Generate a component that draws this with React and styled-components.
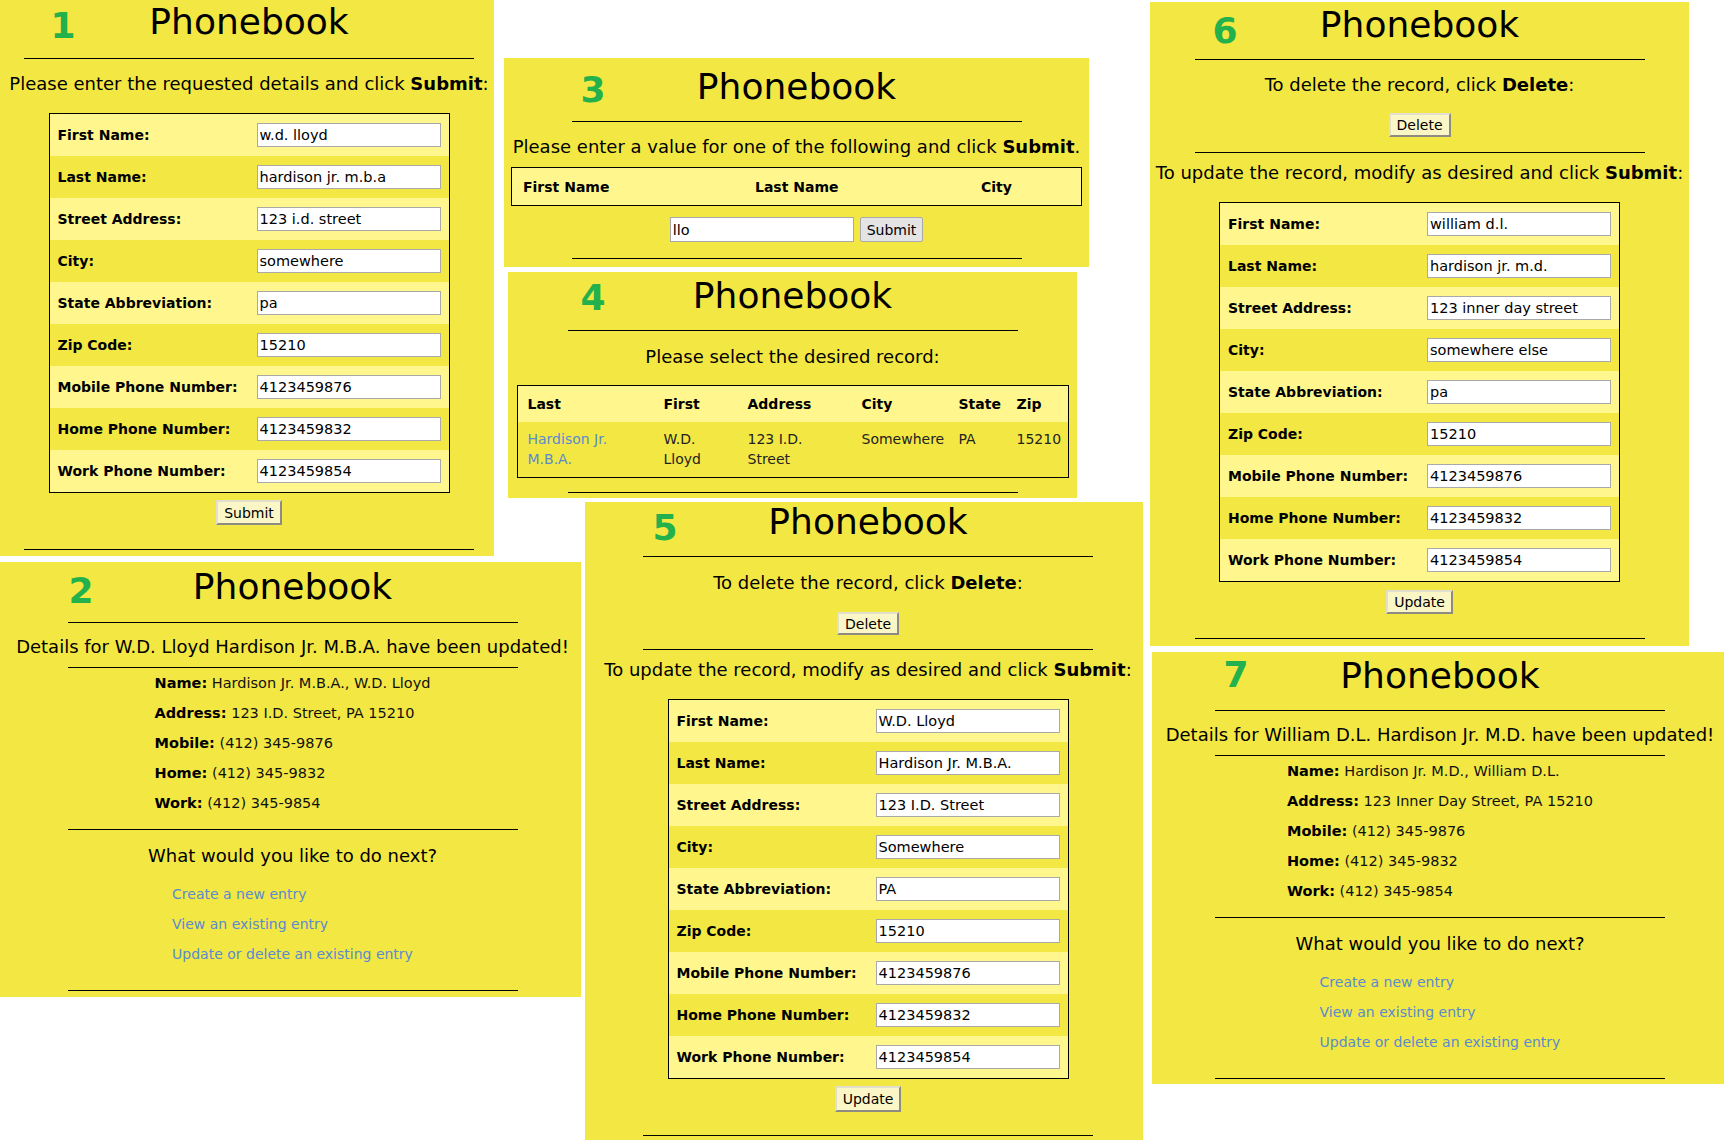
import React from 'react';
import styled, { createGlobalStyle } from 'styled-components';

const FONT = '"DejaVu Sans", Verdana, sans-serif';
const YELLOW = '#f3e843';
const LIGHT = '#fff78e';
const GREEN = '#22b14c';
const LINK = '#5a8ad0';

const GlobalStyle = createGlobalStyle`
  body {
    margin: 0;
    background: #fff;
    font-family: ${FONT};
    color: #000;
  }
`;

const Canvas = styled.div`
  position: relative;
  width: 1731px;
  height: 1148px;
  overflow: hidden;
  background: #fff;
`;

// each screenshot sits at its own spot on the collage
const Shot = styled.section`
  position: absolute;
  left: ${p => p.$x}px;
  top: ${p => p.$y}px;
  width: ${p => p.$w}px;
  height: ${p => p.$h}px;
  box-sizing: border-box;
  padding-left: ${p => p.$shift || 0}px;
  display: flex;
  flex-direction: column;
  align-items: center;
  background: ${YELLOW};
  overflow: hidden;
`;

const Badge = styled.span`
  position: absolute;
  left: ${p => p.$x}px;
  top: ${p => p.$y}px;
  transform: translate(-50%, -50%);
  font: 700 36px/1 ${FONT};
  color: ${GREEN};
`;

const Title = styled.h1`
  margin: ${p => p.$top}px 0 0;
  font: 400 36px/44px ${FONT};
  color: #000;
  text-align: center;
  flex-shrink: 0;
`;

const Rule = styled.hr`
  width: 450px;
  height: 0;
  margin: ${p => p.$top}px 0 0;
  border: 0;
  border-top: 1px solid #000;
  flex-shrink: 0;
`;

const Prompt = styled.p`
  margin: ${p => p.$top}px 0 0;
  font-size: 18px;
  line-height: 20px;
  white-space: nowrap;
  text-align: center;
  flex-shrink: 0;

  b {
    font-weight: 700;
  }
`;

const Action = styled.button`
  margin-top: ${p => p.$top}px;
  height: ${p => p.$h || 24}px;
  padding: 0 6px;
  font: 14px ${FONT};
  color: #000;
  background: ${p => (p.$plain ? '#e4e4e4' : '#fbf6c6')};
  border: ${p => (p.$plain ? '1px solid #a9a9a9' : '2px outset #e2dfcf')};
  border-radius: ${p => (p.$plain ? '2px' : '0')};
  flex-shrink: 0;
  cursor: pointer;
`;

/* ---------- entry form (pages 1, 5, 6) ---------- */

const FormTable = styled.table`
  margin-top: ${p => p.$top}px;
  width: 401px;
  border: 1px solid #000;
  border-collapse: separate;
  border-spacing: 0;
  flex-shrink: 0;
`;

const FormRow = styled.tr`
  height: 42px;
  background: ${p => (p.$alt ? LIGHT : 'transparent')};
`;

const FieldLabel = styled.th`
  width: 199px;
  padding: 0 0 0 8px;
  text-align: left;
  font: 700 14px ${FONT};
  white-space: nowrap;
`;

const FieldCell = styled.td`
  padding: 0 8px 0 0;
  vertical-align: middle;
`;

const Field = styled.input`
  box-sizing: border-box;
  display: block;
  width: ${p => p.$w || 184}px;
  height: ${p => p.$h || 24}px;
  padding: 0 2px;
  border: 1px solid #a9a9a9;
  background: #fff;
  font: 14.5px ${FONT};
  color: #000;
  outline: none;
`;

const LABELS = [
  'First Name:',
  'Last Name:',
  'Street Address:',
  'City:',
  'State Abbreviation:',
  'Zip Code:',
  'Mobile Phone Number:',
  'Home Phone Number:',
  'Work Phone Number:',
];

const EntryForm = ({ top, values }) => (
  <FormTable $top={top}>
    <tbody>
      {LABELS.map((label, idx) => (
        <FormRow key={label} $alt={idx % 2 === 0}>
          <FieldLabel>{label}</FieldLabel>
          <FieldCell>
            <Field defaultValue={values[idx]} />
          </FieldCell>
        </FormRow>
      ))}
    </tbody>
  </FormTable>
);

/* ---------- search (page 3) ---------- */

const SearchTable = styled.table`
  margin-top: ${p => p.$top}px;
  width: 571px;
  height: 39px;
  table-layout: fixed;
  border: 1px solid #000;
  border-collapse: separate;
  border-spacing: 0;
  background: ${LIGHT};
  flex-shrink: 0;
`;

const Col = styled.col`
  width: ${p => p.$w}px;
`;

const HeadCell = styled.th`
  padding: 0 0 0 ${p => p.$pad || 10}px;
  text-align: left;
  font: 700 14px ${FONT};
  white-space: nowrap;
`;

const SearchBar = styled.div`
  display: flex;
  gap: 6px;
  margin-top: ${p => p.$top}px;
  flex-shrink: 0;
`;

/* ---------- results (page 4) ---------- */

const ResultTable = styled.table`
  margin-top: ${p => p.$top}px;
  width: 552px;
  table-layout: fixed;
  border: 1px solid #000;
  border-collapse: separate;
  border-spacing: 0;
  flex-shrink: 0;
`;

const HeadRow = styled.tr`
  height: 36px;
  background: ${LIGHT};
`;

const DataCell = styled.td`
  height: 55px;
  padding: 7px 0 0 10px;
  box-sizing: border-box;
  vertical-align: top;
  font: 14px/20px ${FONT};
  color: #222;
`;

const RecordLink = styled.a`
  color: ${LINK};
  text-decoration: none;
`;

/* ---------- confirmation (pages 2, 7) ---------- */

const DetailList = styled.div`
  margin-top: ${p => p.$top || 0}px;
  text-align: left;
  flex-shrink: 0;
`;

const DetailLine = styled.p`
  margin: 0;
  font-size: 14.5px;
  line-height: 30px;
  white-space: nowrap;
  color: #111;

  strong {
    color: #000;
  }
`;

const NextHeading = styled.h2`
  margin: ${p => p.$top}px 0 0;
  font: 400 18px/22px ${FONT};
  text-align: center;
  flex-shrink: 0;
`;

const NextLinks = styled.ul`
  list-style: none;
  margin: ${p => p.$top}px 0 0;
  padding: 0;
  flex-shrink: 0;

  li {
    font-size: 14px;
    line-height: 30px;
    white-space: nowrap;
  }

  a {
    color: ${LINK};
    text-decoration: none;
  }
`;

const Confirmation = ({ who, details }) => (
  <>
    <Prompt $top={14}>Details for {who} have been updated!</Prompt>
    <Rule $top={10} />
    <DetailList>
      {details.map(([k, v]) => (
        <DetailLine key={k}>
          <strong>{k}:</strong> {v}
        </DetailLine>
      ))}
    </DetailList>
    <Rule $top={11} />
    <NextHeading $top={15}>What would you like to do next?</NextHeading>
    <NextLinks $top={12}>
      <li><a href="#create">Create a new entry</a></li>
      <li><a href="#view">View an existing entry</a></li>
      <li><a href="#update">Update or delete an existing entry</a></li>
    </NextLinks>
    <Rule $top={21} />
  </>
);

const PHONES = ['4123459876', '4123459832', '4123459854'];

export default function App() {
  return (
    <Canvas>
      <GlobalStyle />

      {/* 1 */}
      <Shot $x={0} $y={0} $w={494} $h={556} $shift={4}>
        <Badge $x={63} $y={26}>1</Badge>
        <Title $top={0}>Phonebook</Title>
        <Rule $top={14} />
        <Prompt $top={15}>Please enter the requested details and click <b>Submit</b>:</Prompt>
        <EntryForm
          top={19}
          values={['w.d. lloyd', 'hardison jr. m.b.a', '123 i.d. street', 'somewhere', 'pa', '15210', ...PHONES]}
        />
        <Action $top={7} $h={25}>Submit</Action>
        <Rule $top={24} />
      </Shot>

      {/* 2 */}
      <Shot $x={0} $y={562} $w={581} $h={435} $shift={4}>
        <Badge $x={81} $y={29}>2</Badge>
        <Title $top={3}>Phonebook</Title>
        <Rule $top={13} />
        <Confirmation
          who="W.D. Lloyd Hardison Jr. M.B.A."
          details={[
            ['Name', 'Hardison Jr. M.B.A., W.D. Lloyd'],
            ['Address', '123 I.D. Street, PA 15210'],
            ['Mobile', '(412) 345-9876'],
            ['Home', '(412) 345-9832'],
            ['Work', '(412) 345-9854'],
          ]}
        />
      </Shot>

      {/* 3 */}
      <Shot $x={504} $y={58} $w={585} $h={209}>
        <Badge $x={89} $y={32}>3</Badge>
        <Title $top={7}>Phonebook</Title>
        <Rule $top={12} />
        <Prompt $top={15}>Please enter a value for one of the following and click <b>Submit</b>.</Prompt>
        <SearchTable $top={10}>
          <colgroup>
            <Col $w={232} />
            <Col $w={226} />
            <Col $w={111} />
          </colgroup>
          <tbody>
            <tr>
              <HeadCell $pad={11}>First Name</HeadCell>
              <HeadCell $pad={11}>Last Name</HeadCell>
              <HeadCell $pad={11}>City</HeadCell>
            </tr>
          </tbody>
        </SearchTable>
        <SearchBar $top={11}>
          <Field $w={184} $h={25} defaultValue="llo" />
          <Action $top={0} $h={25} $plain>Submit</Action>
        </SearchBar>
        <Rule $top={16} />
      </Shot>

      {/* 4 */}
      <Shot $x={508} $y={272} $w={569} $h={226}>
        <Badge $x={85} $y={26}>4</Badge>
        <Title $top={2}>Phonebook</Title>
        <Rule $top={12} />
        <Prompt $top={16}>Please select the desired record:</Prompt>
        <ResultTable $top={18}>
          <colgroup>
            <Col $w={136} />
            <Col $w={84} />
            <Col $w={114} />
            <Col $w={97} />
            <Col $w={58} />
            <Col $w={61} />
          </colgroup>
          <tbody>
            <HeadRow>
              <HeadCell>Last</HeadCell>
              <HeadCell>First</HeadCell>
              <HeadCell>Address</HeadCell>
              <HeadCell>City</HeadCell>
              <HeadCell>State</HeadCell>
              <HeadCell>Zip</HeadCell>
            </HeadRow>
            <tr>
              <DataCell><RecordLink href="#record">Hardison Jr.<br />M.B.A.</RecordLink></DataCell>
              <DataCell>W.D.<br />Lloyd</DataCell>
              <DataCell>123 I.D.<br />Street</DataCell>
              <DataCell>Somewhere</DataCell>
              <DataCell>PA</DataCell>
              <DataCell>15210</DataCell>
            </tr>
          </tbody>
        </ResultTable>
        <Rule $top={14} />
      </Shot>

      {/* 5 */}
      <Shot $x={585} $y={502} $w={558} $h={638} $shift={8}>
        <Badge $x={80} $y={26}>5</Badge>
        <Title $top={-2}>Phonebook</Title>
        <Rule $top={12} />
        <Prompt $top={16}>To delete the record, click <b>Delete</b>:</Prompt>
        <Action $top={19} $h={23}>Delete</Action>
        <Rule $top={14} />
        <Prompt $top={10}>To update the record, modify as desired and click <b>Submit</b>:</Prompt>
        <EntryForm
          top={19}
          values={['W.D. Lloyd', 'Hardison Jr. M.B.A.', '123 I.D. Street', 'Somewhere', 'PA', '15210', ...PHONES]}
        />
        <Action $top={7} $h={26}>Update</Action>
        <Rule $top={23} />
      </Shot>

      {/* 6 */}
      <Shot $x={1150} $y={2} $w={539} $h={644}>
        <Badge $x={75} $y={29}>6</Badge>
        <Title $top={1}>Phonebook</Title>
        <Rule $top={12} />
        <Prompt $top={15}>To delete the record, click <b>Delete</b>:</Prompt>
        <Action $top={18} $h={24}>Delete</Action>
        <Rule $top={15} />
        <Prompt $top={10}>To update the record, modify as desired and click <b>Submit</b>:</Prompt>
        <EntryForm
          top={19}
          values={['william d.l.', 'hardison jr. m.d.', '123 inner day street', 'somewhere else', 'pa', '15210', ...PHONES]}
        />
        <Action $top={8} $h={24}>Update</Action>
        <Rule $top={24} />
      </Shot>

      {/* 7 */}
      <Shot $x={1152} $y={652} $w={572} $h={432} $shift={4}>
        <Badge $x={84} $y={23}>7</Badge>
        <Title $top={2}>Phonebook</Title>
        <Rule $top={12} />
        <Confirmation
          who="William D.L. Hardison Jr. M.D."
          details={[
            ['Name', 'Hardison Jr. M.D., William D.L.'],
            ['Address', '123 Inner Day Street, PA 15210'],
            ['Mobile', '(412) 345-9876'],
            ['Home', '(412) 345-9832'],
            ['Work', '(412) 345-9854'],
          ]}
        />
      </Shot>
    </Canvas>
  );
}
